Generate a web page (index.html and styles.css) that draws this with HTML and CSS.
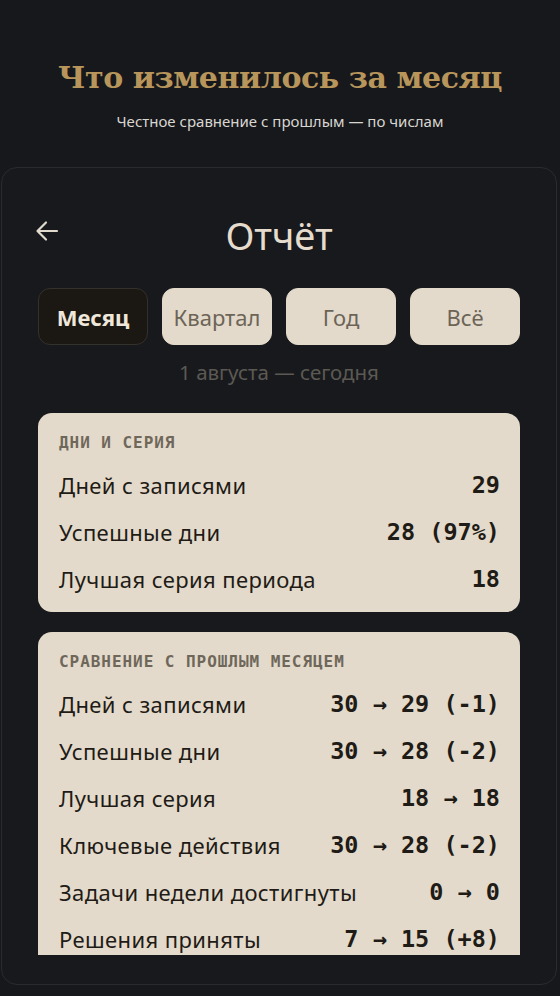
FILE: index.html
```html
<!DOCTYPE html>
<html lang="ru">
<head>
<meta charset="utf-8">
<link rel="stylesheet" href="styles.css">
</head>
<body>
<header class="hero">
  <h1 class="hero-title">Что изменилось за месяц</h1>
  <p class="hero-sub">Честное сравнение с прошлым — по числам</p>
</header>
<section class="frame">
  <div class="topbar">
    <svg class="back" width="24" height="22" viewBox="0 0 24 22" aria-hidden="true">
      <path d="M22 11H3M11 2.5L2.5 11l8.5 8.5" fill="none" stroke="#e2dacd" stroke-width="2.2" stroke-linecap="round" stroke-linejoin="round"/>
    </svg>
    <h2 class="screen-title">Отчёт</h2>
  </div>
  <div class="tabs">
    <button class="tab tab-active">Месяц</button>
    <button class="tab">Квартал</button>
    <button class="tab">Год</button>
    <button class="tab">Всё</button>
  </div>
  <p class="range">1 августа — сегодня</p>
  <div class="scroll">
    <div class="card">
      <div class="card-head">ДНИ И СЕРИЯ</div>
      <div class="row"><span class="label">Дней с записями</span><span class="val">29</span></div>
      <div class="row"><span class="label">Успешные дни</span><span class="val">28 (97%)</span></div>
      <div class="row"><span class="label">Лучшая серия периода</span><span class="val">18</span></div>
    </div>
    <div class="card">
      <div class="card-head">СРАВНЕНИЕ С ПРОШЛЫМ МЕСЯЦЕМ</div>
      <div class="row"><span class="label">Дней с записями</span><span class="val">30 → 29 (-1)</span></div>
      <div class="row"><span class="label">Успешные дни</span><span class="val">30 → 28 (-2)</span></div>
      <div class="row"><span class="label">Лучшая серия</span><span class="val">18 → 18</span></div>
      <div class="row"><span class="label">Ключевые действия</span><span class="val">30 → 28 (-2)</span></div>
      <div class="row"><span class="label">Задачи недели достигнуты</span><span class="val">0 → 0</span></div>
      <div class="row"><span class="label">Решения приняты</span><span class="val">7 → 15 (+8)</span></div>
    </div>
  </div>
</section>
</body>
</html>
```
FILE: styles.css
```css
* { box-sizing: border-box; }
html, body { margin: 0; padding: 0; }
body {
  background: #17181c;
  width: 560px;
  height: 996px;
  overflow: hidden;
  font-family: "Noto Sans", "Open Sans", sans-serif;
}
.hero {
  padding-top: 56px;
  text-align: center;
  height: 167px;
}
.hero-title {
  margin: 0;
  font-family: "DejaVu Serif", serif;
  font-weight: 700;
  font-size: 30px;
  line-height: 44px;
  color: #b8955a;
  letter-spacing: -0.45px;
}
.hero-sub {
  margin: 10px 0 0;
  font-size: 15px;
  line-height: 22px;
  color: #d9d6d0;
}
.frame {
  margin-left: 1px;
  width: 556px;
  height: 818px;
  border: 1px solid #2a2b30;
  border-radius: 16px;
  background: #18191d;
  padding: 39px 36px 29px;
  display: flex;
  flex-direction: column;
}
.topbar {
  position: relative;
  height: 56px;
  display: flex;
  align-items: center;
  justify-content: center;
  margin-bottom: 25px;
}
.back {
  position: absolute;
  left: -3px;
  top: 13px;
}
.screen-title {
  margin: 0;
  font-weight: 400;
  font-size: 38px;
  line-height: 56px;
  color: #e6dccd;
}
.tabs {
  display: grid;
  grid-template-columns: repeat(4, 1fr);
  gap: 14px;
}
.tab {
  height: 57px;
  border: 1px solid #e3dacb;
  border-radius: 12px;
  background: #e3dacb;
  color: #6c6457;
  font-family: "Noto Sans", sans-serif;
  font-size: 22px;
  padding: 0;
}
.tab-active {
  background: #1b1813;
  border-color: #34312c;
  color: #efe7da;
  font-weight: 700;
}
.range {
  margin: 15px 0 29px;
  text-align: center;
  font-size: 20.5px;
  line-height: 24px;
  color: #5c5953;
}
.scroll {
  flex: 1;
  overflow: hidden;
  display: flex;
  flex-direction: column;
  gap: 20px;
}
.card {
  flex-shrink: 0;
  background: #e3dacb;
  border-radius: 14px;
  padding: 20px 20px 10px 21px;
}
.card-head {
  font-family: "DejaVu Sans Mono", monospace;
  font-weight: 700;
  font-size: 16px;
  line-height: 20px;
  letter-spacing: 0.95px;
  color: #6f675a;
  margin-bottom: 8px;
}
.row {
  height: 47px;
  display: flex;
  align-items: center;
  justify-content: space-between;
}
.label {
  font-size: 22px;
  letter-spacing: 0.4px;
  color: #1f1b16;
}
.val {
  font-family: "DejaVu Sans Mono", monospace;
  font-weight: 700;
  font-size: 23.5px;
  color: #1f1b16;
  white-space: pre;
}
```
